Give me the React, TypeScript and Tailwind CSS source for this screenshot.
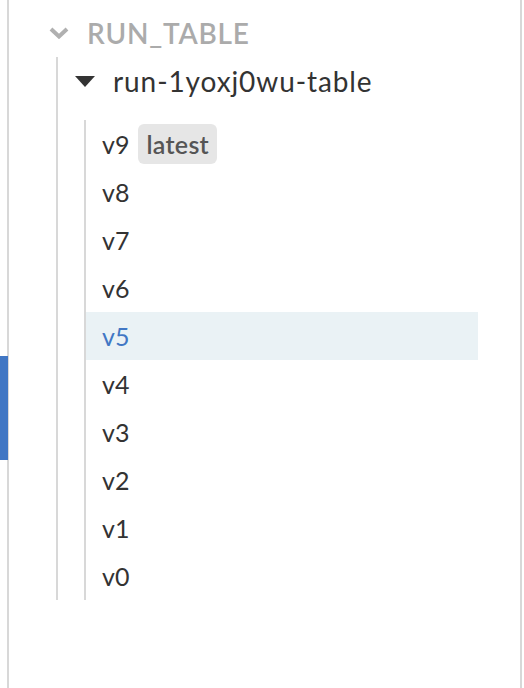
import React from 'react';

const versions = ['v9', 'v8', 'v7', 'v6', 'v5', 'v4', 'v3', 'v2', 'v1', 'v0'];

const ChevronDown = () => (
  <svg width="20" height="12" viewBox="0 0 20 12" className="shrink-0">
    <path d="M2 2 L10 9.5 L18 2" fill="none" stroke="#b0b0b0" strokeWidth="4" strokeLinejoin="miter" />
  </svg>
);

const Caret = () => (
  <svg width="20" height="11" viewBox="0 0 20 11" className="shrink-0">
    <path d="M0 0 H20 L10 11 Z" fill="#333333" />
  </svg>
);

// Artifact version tree
const App: React.FC = () => {
  const selected = 'v5';
  return (
    <div
      className="relative w-[524px] h-[688px] bg-white pl-[7px] pr-[2px]"
      style={{ fontFamily: 'Lato, "Open Sans", sans-serif' }}
    >
      {/* active indicator */}
      <div className="absolute left-0 top-[356px] w-[8px] h-[104px] bg-[#4177c4]" />

      <div className="h-full border-l-2 border-r-2 border-[#d8d8d8] pt-[9px]">
        {/* Section header */}
        <div className="flex items-center h-[48px] pl-[40px] gap-[18px]">
          <ChevronDown />
          <span className="text-[28px] font-semibold tracking-[0.8px] text-[#ababab] leading-none">RUN_TABLE</span>
        </div>

        {/* Children */}
        <div className="ml-[47px] border-l-2 border-[#d8d8d8] w-[422px]">
          <div className="flex items-center h-[48px] pl-[17px] gap-[18px]">
            <Caret />
            <span className="text-[28px] tracking-[0.9px] text-[#333333] leading-none">run-1yoxj0wu-table</span>
          </div>

          <div className="mt-[15px] ml-[26px] border-l-2 border-[#d8d8d8]">
            {versions.map((v) => (
              <div
                key={v}
                className={`flex items-center h-[48px] pl-[16px] gap-[9px] text-[25px] leading-none ${
                  v === selected ? 'bg-[#eaf2f5] text-[#4177c4]' : 'text-[#333333]'
                }`}
              >
                <span>{v}</span>
                {v === 'v9' && (
                  <span className="bg-[#e6e6e6] rounded-[6px] px-[8px] h-[40px] flex items-center text-[25px] tracking-[0.3px] font-semibold text-[#555555]">
                    latest
                  </span>
                )}
              </div>
            ))}
          </div>
        </div>
      </div>
    </div>
  );
};

export default App;
